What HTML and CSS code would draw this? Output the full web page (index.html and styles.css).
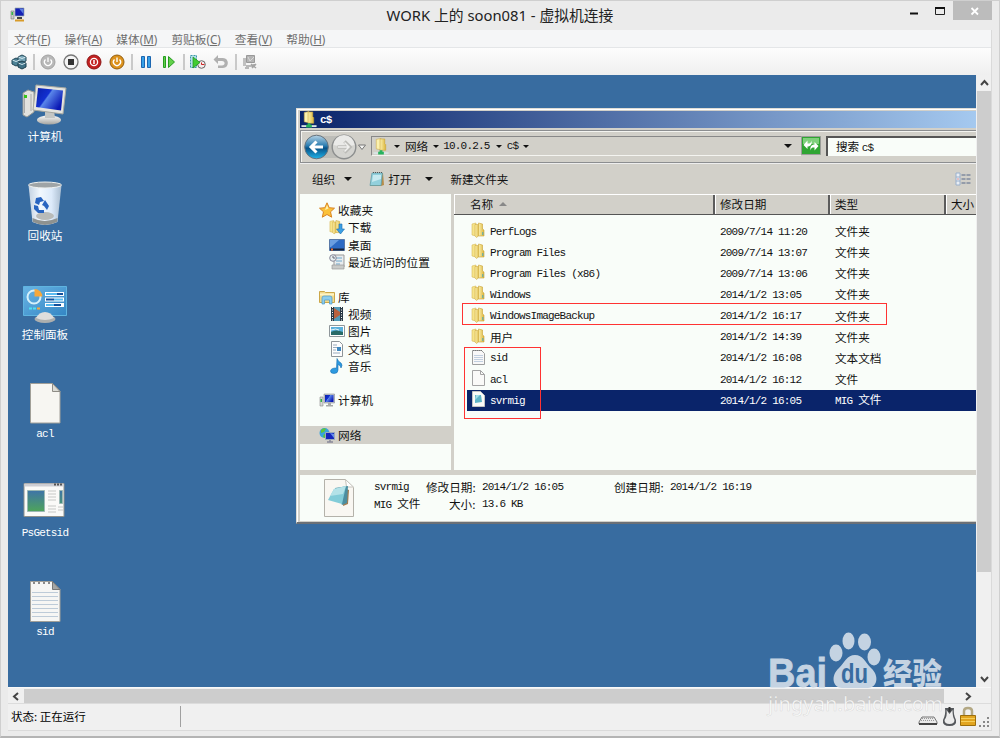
FILE: index.html
```html
<!DOCTYPE html>
<html lang="zh-CN">
<head>
<meta charset="utf-8">
<title>WORK 上的 soon081 - 虚拟机连接</title>
<link rel="stylesheet" href="styles.css">
</head>
<body>
<svg class="defs" width="0" height="0">
  <defs>
    <linearGradient id="gFold" x1="0" x2="1"><stop offset="0" stop-color="#fbf0ae"/><stop offset="1" stop-color="#dcb63c"/></linearGradient>
    <linearGradient id="gScreen" x1="0" y1="0" x2="1" y2=".6"><stop offset="0" stop-color="#0a1fa8"/><stop offset=".45" stop-color="#1230d0"/><stop offset=".5" stop-color="#5a86ea"/><stop offset="1" stop-color="#0a18b4"/></linearGradient>
    <linearGradient id="gMetal" x1="0" y1="0" x2="0" y2="1"><stop offset="0" stop-color="#fafafa"/><stop offset="1" stop-color="#a4a4a0"/></linearGradient>
    <linearGradient id="gBin" x1="0" x2="1"><stop offset="0" stop-color="#c4d2e2"/><stop offset=".35" stop-color="#f2f8fe"/><stop offset=".7" stop-color="#dceafa"/><stop offset="1" stop-color="#a9bccf"/></linearGradient>
    <linearGradient id="gPanel" x1="0" y1="0" x2="1" y2="1"><stop offset="0" stop-color="#68b4e4"/><stop offset="1" stop-color="#3486c4"/></linearGradient>
    <linearGradient id="gBlue" x1="0" y1="0" x2="0" y2="1"><stop offset="0" stop-color="#b8d4e6"/><stop offset=".45" stop-color="#2a7cb0"/><stop offset=".55" stop-color="#075288"/><stop offset="1" stop-color="#20b4ea"/></linearGradient>
    <linearGradient id="gApp" x1="0" y1="0" x2="0" y2="1"><stop offset="0" stop-color="#3e74a8"/><stop offset="1" stop-color="#4ea45a"/></linearGradient>
    <symbol id="folder" viewBox="0 0 14 16">
      <path d="M1 2l4-1v13l-4-1z" fill="#f6e48a" stroke="#d6b958" stroke-width=".6"/>
      <path d="M4 2.500h4.500V13L5.500 15.500 4 14z" fill="url(#gFold)" stroke="#c9a336" stroke-width=".5"/>
      <path d="M7.500 1l4 1v5l1.500 1v6H7.500z" fill="url(#gFold)" stroke="#c9a336" stroke-width=".6"/>
      <path d="M11.800 10v3" stroke="#4ba9b8"/>
    </symbol>
    <symbol id="netfolder" viewBox="0 0 16 18">
      <path d="M3 1.500l5-1v12l-5-1z" fill="#fbf1ae" stroke="#cfae4a" stroke-width=".6"/>
      <path d="M7 1h5v5l1 1v6H7z" fill="url(#gFold)" stroke="#c9a336" stroke-width=".6"/>
      <path d="M0 16h16" stroke="#d9e4e4" stroke-width="2"/><path d="M5 16h6M8 13v3" stroke="#27b35d" stroke-width="3"/>
    </symbol>
    <symbol id="pc" viewBox="0 0 16 16">
      <path d="M1 5h3v9H1z" fill="#d6d8d6" stroke="#888" stroke-width=".6"/><path d="M1.500 7h1.500v3H1.500z" fill="#2fb344"/>
      <path d="M5 2h10.500v9H5z" fill="#c2c6ce" stroke="#8a8e96" stroke-width=".6"/><path d="M6 3h8.500v7H6z" fill="url(#gScreen)"/>
      <path d="M9 11h3v2h2v1.500H7V13h2z" fill="#a8aaa8"/>
    </symbol>
  </defs>
</svg>

<div class="window">
  <header class="titlebar">
    <svg class="app-icon" width="16" height="16" viewBox="0 0 16 16"><path d="M1 4h3v8H1z" fill="#c9cbc9" stroke="#777" stroke-width=".6"/><path d="M1.500 5h1.500v3H1.500z" fill="#34b848"/><path d="M5 1h9v8H5z" fill="#1420b4" stroke="#9aa" stroke-width=".7"/><path d="M9 1.500L13.500 2v5z" fill="#5c7ee0"/><path d="M7 10h5v2H7z" fill="#444"/><path d="M5 13.500h9" stroke="#d89b28" stroke-width="2"/></svg>
    <h1 class="title">WORK 上的 soon081 - 虚拟机连接</h1>
    <div class="controls">
      <svg width="88" height="20" viewBox="0 0 88 20"><path d="M6 13.500h8" stroke="#111" stroke-width="2"/><path d="M31.500 7.500h9v7h-9z" fill="none" stroke="#222"/><path d="M31 8h10" stroke="#111" stroke-width="2"/><path d="M49 1h43v19H49z" fill="#bcbcbc"/><path d="M67.500 8l6.500 6.500m0-6.500l-6.500 6.500" stroke="#fff" stroke-width="1.800"/></svg>
    </div>
  </header>

  <div class="client">
    <nav class="menubar">
      <span>文件(<u>F</u>)</span><span>操作(<u>A</u>)</span><span>媒体(<u>M</u>)</span><span>剪贴板(<u>C</u>)</span><span>查看(<u>V</u>)</span><span>帮助(<u>H</u>)</span>
    </nav>
    <div class="toolbar">
      <svg viewBox="0 0 18 18"><path d="M2 7l4-2 4 2v4l-4 2-4-2z" fill="#4d8296" stroke="#204656"/><path d="M8 4l4-2 4 2v4l-4 2-4-2z" fill="#78a6b8" stroke="#204656"/><path d="M8 10l4-2 4 2v4l-4 2-4-2z" fill="#3f7186" stroke="#1c3e4c"/><path d="M2.500 7L6 8.500 9.500 7M8.500 10l3.500 1.500L15.500 10M8.500 4L12 5.500 15.500 4" fill="none" stroke="#d5e8ee"/></svg>
      <i class="sep"></i>
      <svg viewBox="0 0 18 18"><circle cx="9" cy="9" r="7" fill="#b8b8b8" stroke="#a2a2a2"/><path d="M6.500 6.500a3.500 3.500 0 1 0 5 0M9 4.500V9" fill="none" stroke="#fff" stroke-width="1.300"/></svg>
      <svg viewBox="0 0 18 18"><circle cx="9" cy="9" r="7" fill="#f4f4f4" stroke="#777" stroke-width="1.300"/><path d="M6 6h6v6H6z" fill="#333"/></svg>
      <svg viewBox="0 0 18 18"><circle cx="9" cy="9" r="7" fill="#c22020" stroke="#8c1414"/><circle cx="9" cy="9" r="3.600" fill="none" stroke="#fff" stroke-width="1.300"/><path d="M9 7v4" stroke="#fff" stroke-width="1.500"/></svg>
      <svg viewBox="0 0 18 18"><circle cx="9" cy="9" r="7" fill="#dc921c" stroke="#955f10"/><path d="M6.500 6.500a3.500 3.500 0 1 0 5 0M9 4.500V9" fill="none" stroke="#fff" stroke-width="1.400"/></svg>
      <i class="sep"></i>
      <svg viewBox="0 0 18 18"><path d="M4.500 3.500h3v11h-3zM10.500 3.500h3v11h-3z" fill="#36a0e8" stroke="#1c66b0"/></svg>
      <svg viewBox="0 0 18 18"><path d="M3.500 3.500h2v11h-2zM8.500 3.500l6 5.500-6 5.500z" fill="#62d04a" stroke="#269c20"/></svg>
      <i class="sep"></i>
      <svg viewBox="0 0 18 18"><path d="M1.500 2.500h6v12h-6z" fill="#b4e0ea" stroke="#3c98a8" stroke-dasharray="2 1"/><circle cx="12.500" cy="11.500" r="3.800" fill="#f4ecec" stroke="#666"/><path d="M12.500 9.500v2h3" fill="none" stroke="#c22"/><path d="M4 4l7 5.500L4 15z" fill="#42cc32" stroke="#1c8c1c" stroke-width=".7"/></svg>
      <svg viewBox="0 0 18 18"><path d="M6 2L1.500 6.500 6 11V8h4c3.500 0 3.500 4.500 0 4.500H6V15h5c6.500 0 6.500-10 0-10H6z" fill="#b0b0b0"/></svg>
      <i class="sep"></i>
      <svg viewBox="0 0 18 18"><path d="M5.500 2.500h8v7h-8z" fill="#b4b4b4" stroke="#999"/><path d="M2 5h3v8H2z" fill="#c0c0c0"/><path d="M7 4l2 4 4-4" fill="none" stroke="#d8d8d8"/><path d="M5 13h8v-2M4 15h4M10 11l5 4M15 11l-4 4" fill="none" stroke="#a4a4a4" stroke-width="1.600"/></svg>
    </div>

    <div class="viewport">
      <main class="desktop">
        <div class="shortcuts">
          <div class="shortcut">
            <svg viewBox="0 0 48 44"><path d="M2 11l5-3 6 2v20l-7 5-4-2z" fill="#e2e2de" stroke="#979994"/><path d="M3.500 12v19M10 12v17" stroke="#aaa"/><path d="M3 13h3v3H3z" fill="#34c418"/><ellipse cx="28" cy="38" rx="12" ry="4.500" fill="url(#gMetal)"/><path d="M24 28h9l1 8H24z" fill="#c4c6c4"/><path d="M15 3l30 3-3 26-30-4z" fill="#e4e4df" stroke="#a4a69f"/><path d="M17 6l25 2.500-2 20L15 25z" fill="url(#gScreen)"/></svg>
            <span>计算机</span>
          </div>
          <div class="shortcut">
            <svg viewBox="0 0 48 44"><path d="M7.500 4l4 37q12.500 6 25 0l4-37z" fill="url(#gBin)"/><path d="M11.500 37q12 6 25 0l-.5 4q-12 6-24 0z" fill="#8e9290"/><ellipse cx="24" cy="35" rx="9" ry="4" fill="#b9bbb9"/><ellipse cx="24" cy="4" rx="16.500" ry="3" fill="#9fa4a6" stroke="#eef0ee"/><path d="M15 17l5-1 3 4-4 1-1 3-4-2zM24 19l4 6-2 4-3-4-2-1zM13 24l4 1 1 4 5 0v3l-6 0-4-4z" fill="#2864c0"/></svg>
            <span>回收站</span>
          </div>
          <div class="shortcut">
            <svg viewBox="0 0 48 44"><path d="M2.500 6.500h43v29h-43z" fill="url(#gPanel)" stroke="#5fb4e0"/><circle cx="13" cy="17" r="6.500" fill="none" stroke="#d6f0fa" stroke-width="2"/><path d="M13.500 16.500V9a8 8 0 0 1 8 7.500z" fill="#f5a83c"/><path d="M24 14h19M24 19.500h19M24 25h19" stroke="#fff" stroke-width="4"/><path d="M25 14h11M33 19.500h9M25 25h8" stroke="#5abcf0" stroke-width="2"/><path d="M36 14h6M25 19.500h8M33 25h7" stroke="#12509c" stroke-width="2"/><path d="M8 28.500h8" stroke="#50e0f0" stroke-width="2" stroke-dasharray="3 1"/><path d="M16 28.500h3" stroke="#f5a83c" stroke-width="2"/><ellipse cx="24" cy="39" rx="10.500" ry="4" fill="#adafae"/><path d="M15 38q3-6 9-6t9 6q-9 4-18 0z" fill="#dededc"/></svg>
            <span>控制面板</span>
          </div>
          <div class="shortcut">
            <svg viewBox="0 0 48 44"><path d="M9.500 3.500h22l7.500 8v31.500H9.500z" fill="#f7f6f2" stroke="#a19f98"/><path d="M31.500 3.500v8H39z" fill="#dcdcd6" stroke="#8e8c86"/></svg>
            <span class="m">acl</span>
          </div>
          <div class="shortcut">
            <svg viewBox="0 0 48 44"><path d="M3 4.500h40v33H3z" fill="#fafaf8" stroke="#8e908c"/><path d="M3.500 6h39" stroke="#cdced4" stroke-width="3"/><path d="M33 5.500h9" stroke="#555" stroke-width="2" stroke-dasharray="2 1"/><path d="M6.500 11.500h17v21h-17zM38.500 11.500h3v13h-3z" fill="url(#gApp)" stroke="#9bb8b4"/><path d="M27 12h8M27 15h8M27 18h8M27 21h8M27 27h8M27 30h8M27 33h8M37 28h5M37 31h5" stroke="#c6c8c6"/></svg>
            <span class="m">PsGetsid</span>
          </div>
          <div class="shortcut">
            <svg viewBox="0 0 48 44"><path d="M9.500 3.500h22l7.500 8v32H9.500z" fill="#f6f6f4" stroke="#a19f98"/><path d="M11 14.500h26M11 18.500h26M11 22.500h26M11 26.500h26M11 30.500h26M11 34.500h26M11 38.500h26" stroke="#bdcbd8"/><path d="M31.500 3.500v8H39z" fill="#a5a7a5" stroke="#777"/><path d="M12 5h18" stroke="#8a8a8a" stroke-width="2" stroke-dasharray="2 3"/></svg>
            <span class="m">sid</span>
          </div>
        </div>

        <section class="explorer">
          <div class="ex-title"><svg width="16" height="17"><use href="#netfolder"/></svg><b class="m">c$</b></div>
          <div class="ex-nav">
            <svg class="backfwd" width="66" height="30" viewBox="0 0 66 30"><path d="M13 4h30v22H13z" fill="#bdbdb8"/><circle cx="14.500" cy="15" r="11.800" fill="url(#gBlue)" stroke="#66727c"/><path d="M21 15H9.500M14.500 9.500L9 15l5.500 5.500" fill="none" stroke="#fff" stroke-width="3"/><circle cx="42" cy="15" r="11.800" fill="#d4d4d0" stroke="#8c8e8e" stroke-width="1.400"/><path d="M31.500 13a10.500 10 0 0 1 21 0q-10 3-21 0z" fill="#eaeae8"/><path d="M35.500 15H47M42.500 9.500L48 15l-5.500 5.500" fill="none" stroke="#bcbcb8" stroke-width="3.500"/><path d="M36 15h10M42.500 10.500L47 15l-4.500 4.500" fill="none" stroke="#f0f0ee" stroke-width="1.500"/><path d="M56.500 13h7L60 17.500z" fill="#f4f4f2" stroke="#777"/></svg>
            <div class="address">
              <svg width="16" height="17"><use href="#netfolder"/></svg>
              <i class="tri t1"></i><span>网络</span><i class="tri"></i><span class="m ip">10.0.2.5</span><i class="tri"></i><span class="m">c$</span><i class="tri"></i>
              <i class="tri drop"></i>
            </div>
            <svg class="refresh" width="20" height="19" viewBox="0 0 20 19"><path d="M.5.500h19v18H.5z" fill="#2fa532" stroke="#9a9c98"/><path d="M2 2h16v6H2z" fill="#7fd07c"/><path d="M2.500 9l4-4.500v3h2q2-1 2-3 1 5-3 6H6.500V13zM17.500 10l-4 4.500v-3h-2q-2 1-2 3-1-5 3-6h1V6z" fill="#fff"/></svg>
            <div class="search">搜索 <span class="m">c$</span></div>
          </div>
          <div class="ex-cmd">
            <span>组织</span><i class="tri big"></i>
            <svg class="note" width="16" height="16" viewBox="0 0 16 16"><path d="M4 2h10l1 12-3 1H1z" fill="#b58c4a"/><path d="M3 2h10.500L12 14.500H1z" fill="#92d0dc" stroke="#5b9ba8" stroke-width=".7"/><path d="M4 4h8v4L3 11z" fill="#c8eaf0"/><path d="M4 1.500h9" stroke="#555" stroke-dasharray="1 1"/></svg>
            <span>打开</span><i class="tri big t2"></i><span>新建文件夹</span>
            <svg class="view" width="16" height="14" viewBox="0 0 16 14"><path d="M1 1h4v12H1z" fill="#e9eef4" stroke="#9ab0cc"/><path d="M1 5h4M1 9h4" stroke="#9ab0cc"/><path d="M2.500 7h1" stroke="#d33"/><path d="M6.500 3h9M6.500 7h9M6.500 11h9" stroke="#56688a" stroke-dasharray="4 1"/></svg>
          </div>
          <div class="ex-body">
            <aside class="tree">
              <div class="node top"><svg viewBox="0 0 16 16"><path d="M8 .8l2.200 4.900 5.300.5-4 3.600 1.200 5.400L8 12.500l-4.700 2.700 1.200-5.400-4-3.600 5.300-.5z" fill="#fbc23a" stroke="#d98422"/><path d="M8 3l1.500 3.500L6 8z" fill="#fff0b0"/></svg>收藏夹</div>
              <div class="node"><svg viewBox="0 0 16 16"><use href="#folder" width="13" height="16"/><path d="M10 5h3v5h2.500L11.500 15 7.500 10H10z" fill="#3ba0e4" stroke="#1b6cb0" stroke-width=".6"/></svg>下载</div>
              <div class="node"><svg viewBox="0 0 16 16"><path d="M.5 2.500h15v11H.5z" fill="#2d6bc4" stroke="#5a7aa8"/><path d="M1 3h9L2 10H1z" fill="#6a9ee0"/><path d="M1 12.500h14" stroke="#17243c" stroke-width="2"/><path d="M2 12.500h2" stroke="#e86c30" stroke-width="2"/></svg>桌面</div>
              <div class="node"><svg viewBox="0 0 16 16"><path d="M5 1h10v12H5z" fill="#e8ecee" stroke="#999"/><path d="M7 4h6M7 7h6M7 10h4" stroke="#6fa8cc"/><path d="M3 11h12v4H3z" fill="#c9cbc9" stroke="#999" stroke-width=".7"/><circle cx="4" cy="4" r="3.300" fill="#e7f0f0" stroke="#889"/><path d="M4 2v2h2" fill="none" stroke="#667"/></svg>最近访问的位置</div>
              <div class="node gap"></div>
              <div class="node top"><svg viewBox="0 0 16 16"><path d="M.5 2.500h5l1 1h9v10H.5z" fill="#f1d98b" stroke="#cba748"/><path d="M1 5.500h14" stroke="#fff4c4" stroke-width="2"/><path d="M3 15V9q0-2 2-2h6q2 0 2 2v6h-2.500v-4h-5v4z" fill="#8ccdec" stroke="#4c98c8" stroke-width=".7"/></svg>库</div>
              <div class="node"><svg viewBox="0 0 16 16"><path d="M2 1h12v14H2z" fill="#283844"/><path d="M5 1h6v14H5z" fill="#529ab8"/><path d="M5 2l6 4v3l-6 4z" fill="#b9603c"/><path d="M3.500 1v14M12.500 1v14" stroke="#fff" stroke-dasharray="1 1.500"/></svg>视频</div>
              <div class="node"><svg viewBox="0 0 16 16"><path d="M.5 2.500h15v11H.5z" fill="#fff" stroke="#8f979b"/><path d="M2 4h12v8H2z" fill="#5ab0dc"/><path d="M2 9q5-3 12 0v3H2z" fill="#286b68"/><path d="M2 7q5-2 8 0" stroke="#e5f5fa" fill="none"/></svg>图片</div>
              <div class="node"><svg viewBox="0 0 16 16"><path d="M2.500.500h8l3 3v12h-11z" fill="#fdfdfd" stroke="#8e9498"/><path d="M4 4h4M4 6.500h4M4 9h3M4 12h7" stroke="#9ab"/><path d="M8 6h4v4H8z" fill="#3e88c0"/></svg>文档</div>
              <div class="node"><svg viewBox="0 0 16 16"><path d="M8 .5q1 3 4 4.500 2 2 0 5-.3-3-3-3.500V12q0 3.500-4 3.500-3.500 0-3.500-2.500Q2 9.800 7.500 10z" fill="#2d9ae0" stroke="#1a70b4" stroke-width=".6"/></svg>音乐</div>
              <div class="node gap"></div>
              <div class="node top"><svg><use href="#pc"/></svg>计算机</div>
              <div class="node gap"></div>
              <div class="node top selected"><svg viewBox="0 0 16 16"><circle cx="5.500" cy="6" r="5" fill="#36a4dc"/><path d="M2 3q3-3 5-1l-2 3-3 1zM5 7l3 1-2 3-2-1z" fill="#5cc43c"/><path d="M6.500 5.500h9v7h-9z" fill="#1426bc" stroke="#9ab"/><path d="M11 6l4 1v4z" fill="#6890ea"/><path d="M8 15h6M11 13v2" stroke="#889" stroke-width="1.500"/></svg>网络</div>
            </aside>
            <div class="list">
              <div class="head"><div class="c1">名称<i class="sort"></i></div><div class="c2">修改日期</div><div class="c3">类型</div><div class="c4">大小</div></div>
              <div class="rows">
                <div class="row"><svg><use href="#folder"/></svg><span class="m n">PerfLogs</span><span class="m d">2009/7/14 11:20</span><span class="k">文件夹</span></div>
                <div class="row"><svg><use href="#folder"/></svg><span class="m n">Program Files</span><span class="m d">2009/7/14 13:07</span><span class="k">文件夹</span></div>
                <div class="row"><svg><use href="#folder"/></svg><span class="m n">Program Files (x86)</span><span class="m d">2009/7/14 13:06</span><span class="k">文件夹</span></div>
                <div class="row"><svg><use href="#folder"/></svg><span class="m n">Windows</span><span class="m d">2014/1/2 13:05</span><span class="k">文件夹</span></div>
                <div class="row"><svg><use href="#folder"/></svg><span class="m n">WindowsImageBackup</span><span class="m d">2014/1/2 16:17</span><span class="k">文件夹</span></div>
                <div class="row"><svg><use href="#folder"/></svg><span class="n k">用户</span><span class="m d">2014/1/2 14:39</span><span class="k">文件夹</span></div>
                <div class="row"><svg viewBox="0 0 14 16"><path d="M1.500 1.500h9l3 3v11h-12z" fill="#f8f8f8" stroke="#9c9e9e"/><path d="M3 6.500h9M3 8.500h9M3 10.500h9M3 12.500h9" stroke="#c2d0e0"/><path d="M2 1.500h9" stroke="#777" stroke-dasharray="1 1"/></svg><span class="m n">sid</span><span class="m d">2014/1/2 16:08</span><span class="k">文本文档</span></div>
                <div class="row"><svg viewBox="0 0 14 16"><path d="M1.500.500h8l4 4v11h-12z" fill="#fafaf8" stroke="#a4a4a4"/><path d="M9.500.500v4h4" fill="none" stroke="#a4a4a4"/></svg><span class="m n">acl</span><span class="m d">2014/1/2 16:12</span><span class="k">文件</span></div>
                <div class="row active"><svg viewBox="0 0 14 16"><path d="M1.500.500h8l4 4v11h-12z" fill="#fafaf8" stroke="#c4c4c4"/><path d="M4 4h6l1 7-7 1z" fill="#5fb4c8"/><path d="M5 4h4l-5 5z" fill="#a2dce8"/></svg><span class="m n">svrmig</span><span class="m d">2014/1/2 16:05</span><span class="k"><span class="m">MIG </span>文件</span></div>
              </div>
              <div class="mark mark-row"></div>
              <div class="mark mark-files"></div>
            </div>
          </div>
          <footer class="details">
            <svg width="30" height="38" viewBox="0 0 30 38"><path d="M.5.500h21l8 8v29H.5z" fill="#f9f7f2" stroke="#b4b2aa"/><path d="M21.500.500l1 7.500h7z" fill="#fff" stroke="#c4c2ba"/><path d="M20 9l5 2-1 14-5 2z" fill="#a37c50"/><path d="M11 9l13-2-1 17-5 2z" fill="#4c8ea0"/><path d="M10 10l12-3-4 18-14-4z" fill="#82ccd8"/><path d="M10 10l12-3-3 8-13 2z" fill="#b4e2e8"/></svg>
            <div class="info">
              <div><span class="m w1">svrmig</span><span class="w2">修改日期:</span><span class="m w3">2014/1/2 16:05</span><span class="w2">创建日期:</span><span class="m">2014/1/2 16:19</span></div>
              <div><span class="w1"><span class="m">MIG </span>文件</span><span class="w2 size">大小:</span><span class="m">13.6 KB</span></div>
            </div>
          </footer>
        </section>
      </main>
      <div class="vscroll">
        <svg width="14" height="15" viewBox="0 0 14 15"><path d="M4 10l3.500-4L11 10" fill="none" stroke="#444" stroke-width="2"/></svg>
        <div class="vthumb"></div>
        <svg width="14" height="15" viewBox="0 0 14 15"><path d="M4 5l3.500 4L11 5" fill="none" stroke="#444" stroke-width="2"/></svg>
      </div>
    </div>
    <div class="hscroll">
      <svg width="16" height="15" viewBox="0 0 16 15"><path d="M10 4L6 7.500 10 11" fill="none" stroke="#444" stroke-width="2"/></svg>
      <div class="hthumb"></div>
      <svg width="16" height="15" viewBox="0 0 16 15"><path d="M6 4l4 3.500L6 11" fill="none" stroke="#444" stroke-width="2"/></svg>
    </div>
    <footer class="status">
      <span class="state">状态: 正在运行</span>
      <svg width="73" height="22" viewBox="0 0 73 22"><path d="M4 11h12l3 5v2H1v-2z" fill="#e9e9e9" stroke="#777"/><path d="M4 12.500h12M3 14.500h14" stroke="#999" stroke-dasharray="1 1"/><path d="M1 18h18" stroke="#444" stroke-width="2"/><path d="M27 2h9q-1 6 2 12 1 6-6.500 6T25 14q3-6 2-12z" fill="#55585c"/><path d="M28.500 4l3 4 3-4q0 7 2 10 0 4-5 4t-5-4q3-4 2-10z" fill="#ececec"/><path d="M31.500 1v5" stroke="#333" stroke-width="2"/><path d="M46 10V5q0-3 4-3t4 3v5" fill="none" stroke="#b3a884" stroke-width="2.500"/><path d="M42.500 9.500h15v10h-15z" fill="#e2a520" stroke="#9c6e0c"/><path d="M43 12.500h14M43 15.500h14" stroke="#f6cf5a"/><path d="M69 12h2M65 16h2M69 16h2M61 20h2M65 20h2M69 20h2" stroke="#888" stroke-width="2"/></svg>
    </footer>
  </div>
  <svg class="watermark" width="190" height="90" viewBox="0 0 190 90">
    <g fill="#c4d3e2">
      <text class="wm-bai" x="2" y="56" textLength="59" lengthAdjust="spacingAndGlyphs">Bai</text>
      <ellipse cx="70" cy="22" rx="6.500" ry="8.500"/><ellipse cx="82.500" cy="10" rx="6" ry="8.500"/><ellipse cx="98.500" cy="11" rx="6.500" ry="8.500"/><ellipse cx="108" cy="26" rx="6.500" ry="8.500"/>
      <path d="M89 24c8 0 10 7 16 13 9 8 6 20-3 20H76c-9 0-12-12-3-20 6-6 8-13 16-13z"/>
      <text class="wm-jy" x="117" y="53" textLength="59" lengthAdjust="spacingAndGlyphs">经验</text>
    </g>
    <text class="wm-du" x="75" y="52" textLength="27" lengthAdjust="spacingAndGlyphs">du</text>
    <text class="wm-url" x="2" y="79.500" textLength="175" lengthAdjust="spacingAndGlyphs">jingyan.baidu.com</text>
  </svg>
</div>
</body>
</html>
```

FILE: styles.css
```css
* { box-sizing: border-box; }
body { margin: 0; overflow: hidden; font: 11.6px/16px "Noto Sans CJK SC", sans-serif; color: #111; }
svg { display: block; flex: none; }
.defs { position: absolute; }
/* half-width Latin text, about half the width of a Chinese character */
.m { font-family: "Liberation Mono", "Noto Sans CJK SC", monospace; font-size: 11px; letter-spacing: -.8px; white-space: pre; }

.window { position: relative; width: 1000px; height: 738px; background: #ebebeb; border: 1px solid #cfcfcf; border-bottom: 2px solid #b4b4b4; padding: 0 7px; }
.titlebar { height: 29px; display: flex; justify-content: space-between; align-items: flex-start; }
.app-icon { margin: 6px 70px 0 2px; }
.title { margin: 4px 0 0; font-size: 14.8px; line-height: 20px; font-weight: 400; font-family: "Noto Sans", "Noto Sans CJK SC", sans-serif; color: #222; }
.controls { margin-top: -1px; }
.client { width: 984px; height: 701px; border: 1px solid #dadada; border-width: 0 1px 1px 0; background: #f0f0f0; }
.menubar { height: 18px; display: flex; gap: 14px; padding: 1px 0 0 6px; background: #f5f6f7; border-bottom: 1px solid #e4e6e8; color: #6e6e6e; font-size: 11.7px; font-family: "Noto Sans", "Noto Sans CJK SC", sans-serif; }
.toolbar { height: 27px; display: flex; align-items: center; padding-left: 2px; background: linear-gradient(#fdfdfd, #efefef); }
.toolbar svg { width: 18px; height: 18px; margin-right: 5px; }
.sep { width: 2px; height: 16px; margin-right: 4px; background: #c9c9c9; }

.viewport { display: flex; height: 612px; }
.desktop { position: relative; width: 968px; overflow: hidden; background: #386ca0; }
.shortcuts { width: 74px; padding-top: 7px; }
.shortcut { height: 99.2px; display: flex; flex-direction: column; align-items: center; color: #fff; }
.shortcut svg { width: 48px; height: 44px; margin-bottom: 2px; }

.vscroll { width: 15px; padding-left: 1px; display: flex; flex-direction: column; align-items: flex-start; }
.vthumb { width: 14px; height: 481px; margin: 1px 0 auto; background: #cdcdcd; }
.hscroll { height: 16px; padding-top: 1px; display: flex; border-top: 1px solid #f8f8f8; }
.hthumb { width: 920px; height: 14px; background: #cdcdcd; }
.hscroll svg:last-child { margin-left: 16px; }
.status { height: 27px; display: flex; justify-content: space-between; padding: 2px 0 0 3px; border-top: 1px solid #dcdcdc; }
.state { width: 170px; height: 21px; padding-top: 2px; border-right: 1px solid #a0a0a0; font-size: 11.5px; color: #000; }

.explorer { position: absolute; left: 288px; top: 33px; width: 684px; height: 416px; padding: 2px 0 2px 3px; background: #d2d0c9; border: 1px solid #dedcd5; border-width: 1px 0 2px 1px; border-bottom-color: #6b7076; box-shadow: inset 1px 1px #fff; }
.ex-title { height: 17px; display: flex; align-items: center; gap: 3px; padding-left: 1px; background: linear-gradient(90deg, #0a246a, #a6caf0); color: #fff; }
.ex-nav { height: 33px; margin-top: 2px; display: flex; align-items: center; border: 1px solid #8c8e90; border-right: 0; box-shadow: 0 1px #eee, inset 1px 1px #f4f4f0; }
.backfwd { margin-left: 1px; }
.address { width: 430px; height: 20px; margin: -1px 0 0 3px; display: flex; align-items: center; border: 1px solid #888; border-right: 0; border-bottom-color: #f4f4f0; padding-left: 1px; }
.tri { flex: none; width: 0; height: 0; margin: 0 5px; border: 3px solid transparent; border-top: 3px solid #111; border-bottom: 0; }
.address .ip { margin: 0 1px 0 -1px; }
.drop { margin: 0 9px 0 auto; border-width: 4px 4px 0; }
.refresh { margin-top: -2px; }
.search { flex: 1; height: 20px; margin: -1px 0 0 5px; padding: 0 0 0 8px; background: #f9fdf9; border: solid #555; border-width: 2px 0 0 2px; }
.ex-cmd { height: 31px; display: flex; align-items: center; padding-left: 12px; }
.big { margin: 0 17px 0 9px; border-width: 4px 4px 0; }
.note { margin-right: 3px; }
.t2 { margin-left: 14px; }
.view { margin: 0 9px 0 auto; }
.ex-body { display: flex; height: 276px; }
.tree { width: 151px; padding-top: 7.5px; background: #f9fdf9; font-size: 11.7px; }
.node { height: 17.3px; display: flex; align-items: center; gap: 3px; padding-left: 29px; }
.node svg { width: 16px; height: 16px; }
.node.top { padding-left: 19px; }
.node.selected { background: #d2d0c9; }
.list { position: relative; flex: 1; margin-left: 3px; background: #f9fdf9; }
.head { display: flex; height: 21px; background: #d2d0c9; border-top: 1px solid #fff; border-bottom: 1px solid #555; line-height: 19px; }
.head div { height: 19px; border-right: 2px solid #5c5c5c; padding-left: 5px; box-shadow: inset 1px 0 #fff; white-space: nowrap; overflow: hidden; }
.head .c1 { width: 261px; padding-left: 16px; }
.head .c2 { width: 115px; }
.head .c3 { width: 116px; }
.head .c4 { flex: 1; border: 0; }
.sort { display: inline-block; margin: 0 0 3px 6px; border: 4px solid transparent; border-top: 0; border-bottom-color: #888; }
.rows { padding: 6px 0 0 13px; }
.row { height: 21.15px; display: flex; align-items: center; padding-left: 4px; }
.row svg { width: 14px; height: 16px; margin: -3px 5px 0 0; }
.n { width: 230px; }
.d { width: 115px; }
.k { padding-bottom: 1px; }
.row.active { background: #0a246a; color: #fff; }
.mark { position: absolute; border: 1px solid #f33; }
.mark-row { left: 8px; top: 109px; width: 425px; height: 22px; }
.mark-files { left: 10px; top: 153px; width: 77px; height: 72px; }
.details { height: 46px; margin-top: 5px; padding: 4px 0 0 24px; display: flex; gap: 20px; background: #f9fdf9; }
.info { margin-top: -1px; }
.info > div { display: flex; height: 17.4px; align-items: center; }
.w1 { width: 52px; white-space: nowrap; }
.w2 { width: 56px; white-space: nowrap; }
.size { padding-left: 23px; }
.w3 { width: 132px; }

.watermark { position: absolute; left: 765px; top: 630px; }
.wm-bai { font: bold 41px "Liberation Sans", sans-serif; stroke: #c4d3e2; stroke-width: .8; }
.wm-jy { font: 900 30px "Noto Sans CJK SC", sans-serif; }
.wm-du { font: bold 27px "Liberation Sans", sans-serif; fill: #386ca0; }
.wm-url { font: 20px "Noto Sans", sans-serif; fill: #fff; fill-opacity: .8; stroke: #999; stroke-opacity: .3; stroke-width: .6; }
```
